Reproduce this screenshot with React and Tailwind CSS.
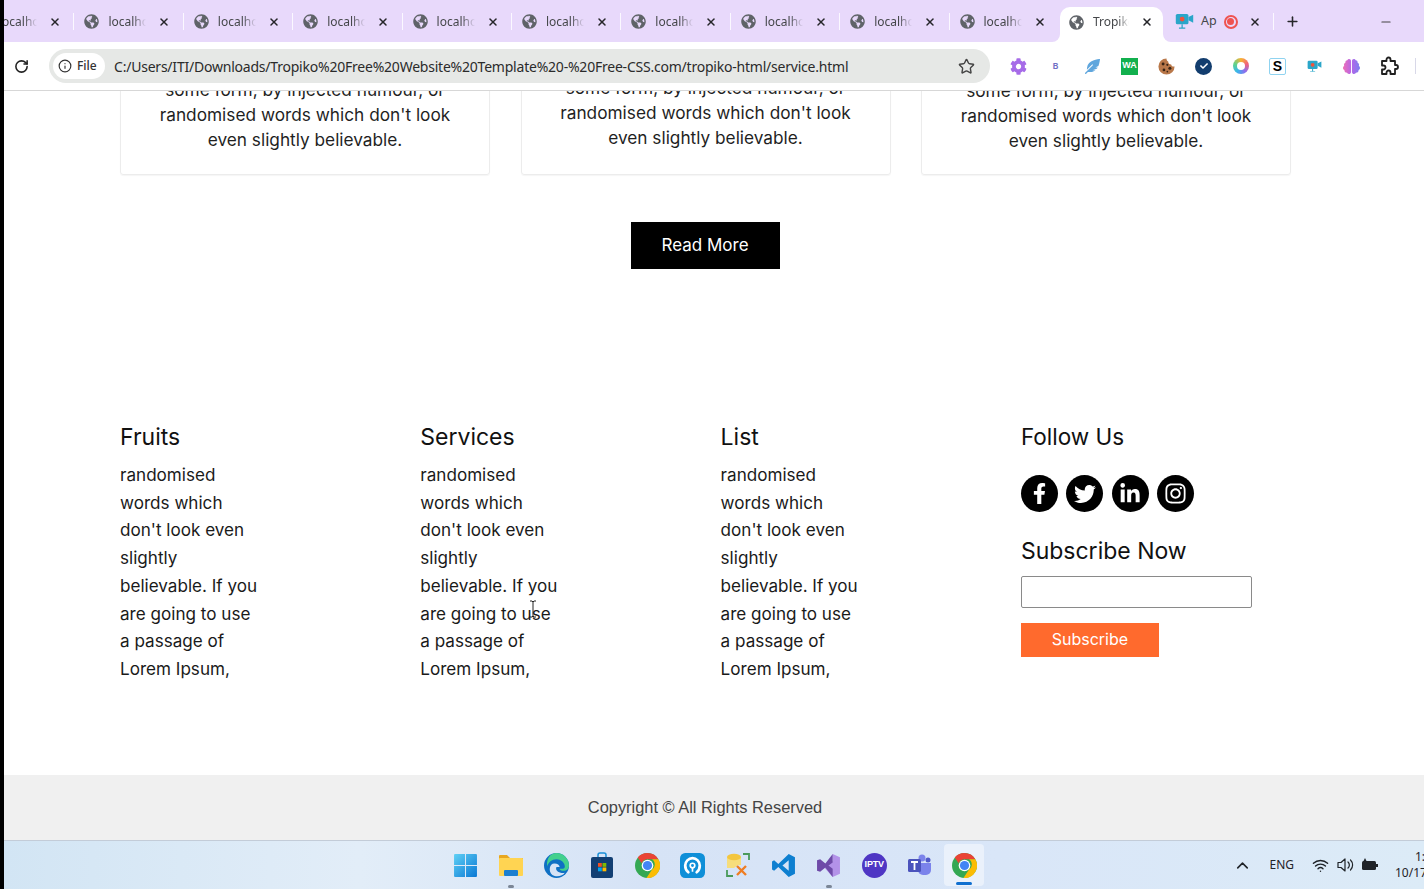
import React from 'react';
import { RotateCw, Star, Info, X, Plus, Minus, ChevronUp, Wifi } from 'lucide-react';
import { FaFacebookF, FaTwitter, FaLinkedinIn, FaInstagram, FaCog, FaFeatherAlt, FaBrain, FaGlobeAmericas, FaCheck } from 'react-icons/fa';

const ui = "font-['Noto_Sans','Open_Sans',sans-serif]";
const body = "font-['Inter','Open_Sans',sans-serif]";

const footerLines = ['randomised', 'words which', "don't look even", 'slightly', 'believable. If you', 'are going to use', 'a passage of', 'Lorem Ipsum,'];

function Tab({ label = 'localhost' }) {
    return (
        <div className="relative flex items-center h-[42px] w-[109.4px] pt-[1px] shrink-0">
            <div className="absolute left-0 top-[13px] h-[17px] w-px bg-[#fbf8ff]"></div>
            <FaGlobeAmericas size={15} className="ml-[11px] shrink-0 text-[#5f6368]" />
            <span className={`ml-[9px] w-[38px] overflow-hidden whitespace-nowrap text-[12px] text-[#45474a] [mask-image:linear-gradient(to_right,black_65%,transparent)] ${ui}`}>{label}</span>
            <X size={12} strokeWidth={3} className="ml-[12px] text-[#26262a]" />
        </div>
    );
}

function CameraIcon({ size = 22 }) {
    return (
        <svg width={size} height={size * 0.85} viewBox="0 0 24 20">
            <rect x="1" y="1" width="16" height="13" rx="2" fill="#2aa6c9" />
            <path d="M17 5l6-3v10l-6-3z" fill="#2aa6c9" />
            <circle cx="9" cy="7.500" r="3" fill="#f0533c" />
            <path d="M9 14v4M5 19h8" stroke="#2aa6c9" strokeWidth="1.600" />
        </svg>
    );
}

function Cookie() {
    return (
        <svg width="17" height="17" viewBox="0 0 20 20">
            <path d="M10 .5a9.500 9.500 0 109.500 9.500c-2 .5-3.500-.5-4-2.500-2 0-3.500-1.500-3.500-3.500C10.500 3.500 10 2 10 .5z" fill="#b9784a" />
            <circle cx="6" cy="7" r="1.700" fill="#3a2416" />
            <circle cx="11" cy="8" r="1.300" fill="#3a2416" />
            <circle cx="14" cy="12" r="1.800" fill="#3a2416" />
            <circle cx="7" cy="14" r="1.600" fill="#3a2416" />
            <circle cx="11" cy="16" r="1" fill="#3a2416" />
        </svg>
    );
}

function PuzzleIcon() {
    return (
        <svg width="20" height="20" viewBox="0 0 20 20">
            <path d="M3 5h4.500V3.500a2 2 0 014 0V5H16v4h1a2 2 0 010 4h-1v5H11.500v-1.500a2 2 0 00-4 0V18H3v-4.500h1.500a2 2 0 000-4H3z" fill="none" stroke="#1f1f1f" strokeWidth="1.800" strokeLinejoin="round" />
        </svg>
    );
}

function ToolbarIcons() {
    return (
        <div className="flex items-center ml-[10px]">
            <div className="w-[37px] flex justify-center"><FaCog size={17} className="text-[#a66be8]" /></div>
            <div className={`w-[37px] flex justify-center text-[9px] font-semibold text-[#6f6fc4] ${ui}`}>B</div>
            <div className="w-[37px] flex justify-center"><FaFeatherAlt size={15} className="text-[#5fa6dd]" /></div>
            <div className="w-[37px] flex justify-center">
                <div className="w-[17px] h-[17px] bg-[#12b04e] flex items-center justify-center text-[9px] font-bold text-white font-['Liberation_Sans',sans-serif]">WA</div>
            </div>
            <div className="w-[37px] flex justify-center"><Cookie /></div>
            <div className="w-[37px] flex justify-center">
                <div className="w-[17px] h-[17px] rounded-full bg-[#123d6e] flex items-center justify-center"><FaCheck size={8} className="text-white" /></div>
            </div>
            <div className="w-[37px] flex justify-center">
                <div className="w-[16px] h-[16px] rounded-full bg-[conic-gradient(#f9b233,#f2607a,#8a6ff0,#39b8ea,#5fd38a,#f9b233)] flex items-center justify-center">
                    <div className="w-[8px] h-[8px] rounded-full bg-white"></div>
                </div>
            </div>
            <div className="w-[37px] flex justify-center">
                <div className="w-[17px] h-[17px] rounded-[2px] border border-[#8fd3f0] flex items-center justify-center text-[14px] font-bold text-black font-['Liberation_Sans',sans-serif]">S</div>
            </div>
            <div className="w-[37px] flex justify-center"><CameraIcon size={15} /></div>
            <div className="w-[37px] flex justify-center">
                <svg width="0" height="0" className="absolute">
                    <defs>
                        <linearGradient id="brainGrad" x1="0" y1="0" x2="1" y2="0">
                            <stop offset="0" stopColor="#ee6fb5" />
                            <stop offset="0.5" stopColor="#b566e8" />
                            <stop offset="1" stopColor="#7b7df0" />
                        </linearGradient>
                    </defs>
                </svg>
                <FaBrain size={17} fill="url(#brainGrad)" />
            </div>
            <div className="w-[37px] flex justify-center"><PuzzleIcon /></div>
            <div className="ml-[8px] h-[16px] w-px bg-[#d8d8e8]"></div>
        </div>
    );
}

function BrowserChrome() {
    return (
        <div className="shrink-0">
            <div className="relative h-[42px] bg-[#e8d9fb] flex overflow-hidden">
                <div className="flex ml-[-40px]">
                    {Array.from({ length: 10 }).map((_, i) => <Tab key={i} />)}
                    <div className="w-[2px]"></div>
                </div>
                <div className="relative flex items-center h-[35px] w-[103px] mt-[7px] pb-[5px] shrink-0 bg-white rounded-t-[10px] self-start">
                    <div className="absolute bottom-0 -left-[8px] w-[8px] h-[8px] bg-white">
                        <div className="w-full h-full bg-[#e8d9fb] rounded-br-[8px]"></div>
                    </div>
                    <div className="absolute bottom-0 -right-[8px] w-[8px] h-[8px] bg-white">
                        <div className="w-full h-full bg-[#e8d9fb] rounded-bl-[8px]"></div>
                    </div>
                    <FaGlobeAmericas size={15} className="ml-[9px] shrink-0 text-[#5f6368]" />
                    <span className={`ml-[9px] w-[36px] overflow-hidden whitespace-nowrap text-[12px] text-[#45474a] [mask-image:linear-gradient(to_right,black_70%,transparent)] ${ui}`}>Tropiko</span>
                    <X size={12} strokeWidth={3} className="ml-[12px] text-[#26262a]" />
                </div>
                <div className="flex items-center h-[42px] ml-[12px] pt-[1px]">
                    <CameraIcon size={19} />
                    <span className={`ml-[7px] text-[12.5px] text-[#45474a] ${ui}`}>Ap</span>
                    <div className="ml-[7px] w-[14px] h-[14px] rounded-full border-2 border-[#ef5350] flex items-center justify-center">
                        <div className="w-[7px] h-[7px] rounded-full bg-[#ef5350]"></div>
                    </div>
                    <X size={12} strokeWidth={3} className="ml-[11px] text-[#26262a]" />
                    <div className="ml-[12px] h-[17px] w-px bg-[#fbf8ff]"></div>
                    <Plus size={15} strokeWidth={2.5} className="ml-[11px] text-[#26262a]" />
                    <Minus size={14} className="ml-[79px] text-[#444]" />
                </div>
            </div>
            <div className="h-[49px] bg-white border-b border-[#d7d7d7] flex items-center">
                <RotateCw size={15} strokeWidth={2.5} className="ml-[10px] text-[#222]" />
                <div className="ml-[20px] w-[941px] h-[34px] rounded-full bg-[#e6e8e6] flex items-center">
                    <div className="ml-[4px] w-[52px] h-[26px] rounded-full bg-white flex items-center">
                        <Info size={14} className="ml-[5px] text-[#333]" />
                        <span className={`ml-[5px] text-[12px] font-medium text-[#333] ${ui}`}>File</span>
                    </div>
                    <span className={`ml-[9px] whitespace-nowrap text-[14px] tracking-[-0.22px] text-[#2b2b2b] ${ui}`}>C:/Users/ITI/Downloads/Tropiko%20Free%20Website%20Template%20-%20Free-CSS.com/tropiko-html/service.html</span>
                    <Star size={17} strokeWidth={2} className="ml-auto mr-[15px] text-[#444]" />
                </div>
                <ToolbarIcons />
            </div>
        </div>
    );
}

function Card({ pb }) {
    return (
        <div className={`w-[370px] h-[150px] shrink-0 flex flex-col justify-end border border-[#ececec] rounded-[3px] text-center text-[17.25px] leading-[25px] text-[#1f1f1f] shadow-[0_1px_1px_rgba(0,0,0,0.04)] ${pb}`}>
            <p>some form, by injected humour, or</p>
            <p>randomised words which don't look</p>
            <p>even slightly believable.</p>
        </div>
    );
}

function FooterColumn({ title }) {
    return (
        <div>
            <h3 className="text-[23px] leading-[36px] font-normal text-[#111]">{title}</h3>
            <div className="mt-[6px] text-[17.1px] leading-[27.72px] text-[#1a1a1a]">
                {footerLines.map((line) => <div key={line} className="whitespace-nowrap">{line}</div>)}
            </div>
        </div>
    );
}

function SocialIcon({ children }) {
    return <div className="w-[37px] h-[37px] rounded-full bg-black flex items-center justify-center text-white">{children}</div>;
}

function FollowColumn() {
    return (
        <div>
            <h3 className="text-[22.5px] leading-[36px] font-normal text-[#111]">Follow Us</h3>
            <div className="mt-[20px] flex gap-[8.5px]">
                <SocialIcon><FaFacebookF size={21} /></SocialIcon>
                <SocialIcon><FaTwitter size={22} /></SocialIcon>
                <SocialIcon><FaLinkedinIn size={22} /></SocialIcon>
                <SocialIcon><FaInstagram size={23} /></SocialIcon>
            </div>
            <h3 className="mt-[21px] text-[23px] leading-[36px] font-normal text-[#111]">Subscribe Now</h3>
            <input className="mt-[7px] block w-[231px] h-[32px] bg-white border border-[#8a8a8a] rounded-[2px]" />
            <button className="mt-[15px] block w-[138px] h-[34px] pb-[2px] bg-[#ff6a2d] text-white text-[16px]">Subscribe</button>
        </div>
    );
}

function TaskIcon({ children }) {
    return <div className="relative w-[45.4px] h-full flex items-center justify-center">{children}</div>;
}

function ChromeIcon() {
    return (
        <svg width="25" height="25" viewBox="0 0 24 24">
            <circle cx="12" cy="12" r="12" fill="#34a853" />
            <path d="M12 0a12 12 0 0110.400 6H12a6 6 0 00-5.600 3.800L2.600 4.400A12 12 0 0112 0z" fill="#ea4335" />
            <path d="M22.400 6A12 12 0 0111 24l5.200-8a6 6 0 00.2-10z" fill="#fbbc04" />
            <circle cx="12" cy="12" r="5.600" fill="#fff" />
            <circle cx="12" cy="12" r="4.400" fill="#4285f4" />
        </svg>
    );
}

function Taskbar() {
    const indicator = "absolute bottom-[1px] left-1/2 -translate-x-1/2 h-[3px] w-[6px] rounded-full bg-[#7b8696]";
    return (
        <div className="relative h-[49px] shrink-0 overflow-hidden border-t border-[#c3ccd8] bg-[linear-gradient(90deg,#d2e5f4_0%,#e2edf8_25%,#d6e3f6_45%,#d9e6f8_70%,#dcebf7_100%)] flex items-center">
            <div className="ml-[439px] flex items-center h-full">
                <TaskIcon>
                    <svg width="25" height="25" viewBox="0 0 24 24">
                        <defs>
                            <linearGradient id="winGrad" x1="0" y1="0" x2="1" y2="1">
                                <stop offset="0" stopColor="#5fd0f5" />
                                <stop offset="1" stopColor="#0a78d4" />
                            </linearGradient>
                        </defs>
                        <path d="M1 2a1 1 0 011-1h9.500v10.500H1zM12.500 1H22a1 1 0 011 1v9.500H12.500zM1 12.500h10.500V23H2a1 1 0 01-1-1zM12.500 12.500H23V22a1 1 0 01-1 1h-9.500z" fill="url(#winGrad)" />
                    </svg>
                </TaskIcon>
                <TaskIcon>
                    <svg width="26" height="24" viewBox="0 0 26 24">
                        <path d="M1 3a1 1 0 011-1h7l3 3h13v4H1z" fill="#e8a720" />
                        <rect x="1" y="5" width="24" height="18" rx="1" fill="#ffd452" />
                        <rect x="6" y="17" width="14" height="6" rx="1" fill="#1c7fd0" />
                    </svg>
                    <div className={indicator}></div>
                </TaskIcon>
                <TaskIcon>
                    <svg width="25" height="25" viewBox="0 0 24 24">
                        <circle cx="12" cy="12" r="12" fill="#0f70c4" />
                        <path d="M12 0a12 12 0 0112 12c0 3.500-2.500 5-5 5-2.500 0-4-1-4-2h3c1.500 0 2-1 2-2 0-4-4-7-8-7-4.500 0-8 3-9 7C2 5 6.500 0 12 0z" fill="#43d08e" />
                        <path d="M10 10c3 0 5 1.500 5 3.500H12c-1 2 0 4.500 4 5.500 1 .3 3 .3 4 0-2 3-8 4.500-12 2-4-3-3-11 2-11z" fill="#d6e3f6" />
                    </svg>
                </TaskIcon>
                <TaskIcon>
                    <svg width="24" height="26" viewBox="0 0 24 26">
                        <path d="M8 6V3a2 2 0 012-2h4a2 2 0 012 2v3" fill="none" stroke="#1a8fd8" strokeWidth="1.500" />
                        <rect x="1" y="5" width="22" height="21" rx="2" fill="#123f73" />
                        <rect x="8" y="11" width="3.800" height="3.800" fill="#f25022" />
                        <rect x="12.500" y="11" width="3.800" height="3.800" fill="#7fba00" />
                        <rect x="8" y="15.500" width="3.800" height="3.800" fill="#00a4ef" />
                        <rect x="12.500" y="15.500" width="3.800" height="3.800" fill="#ffb900" />
                    </svg>
                </TaskIcon>
                <TaskIcon><ChromeIcon /></TaskIcon>
                <TaskIcon>
                    <svg width="25" height="25" viewBox="0 0 24 24">
                        <rect width="24" height="24" rx="5" fill="#0f8fd8" />
                        <path d="M8 18.500C5.500 16.500 5 14 5 12a7 7 0 0114 0c0 2-.5 4.500-3 6.500" fill="none" stroke="#fff" strokeWidth="2.600" strokeLinecap="round" />
                        <circle cx="12" cy="12" r="2.200" fill="none" stroke="#fff" strokeWidth="1.600" />
                        <path d="M12 14v4" stroke="#fff" strokeWidth="1.600" />
                    </svg>
                </TaskIcon>
                <TaskIcon>
                    <svg width="24" height="24" viewBox="0 0 24 24">
                        <path d="M17 1h6v6M1 17v6h6" fill="none" stroke="#4a9a5a" strokeWidth="1.800" />
                        <path d="M1 4v11h7l4-3h3V4z" fill="#f6dd7c" />
                        <ellipse cx="8" cy="4" rx="7" ry="3.200" fill="#f3c63f" />
                        <path d="M11 22l9-9M11 13l9 9" stroke="#ef7d22" strokeWidth="2.400" />
                    </svg>
                </TaskIcon>
                <TaskIcon>
                    <svg width="25" height="25" viewBox="0 0 24 24">
                        <path d="M17 1l6 3v16l-6 3L7 13.500l-4 3.500-2-1.200v-7.600L3 7l4 3.500z" fill="#0e7fd0" />
                        <path d="M17 7l-6 5 6 5z" fill="#d6e3f6" />
                    </svg>
                </TaskIcon>
                <TaskIcon>
                    <svg width="25" height="25" viewBox="0 0 24 24">
                        <path d="M16 1l7 3v16l-7 3-8-9 8-6z" fill="#b392e8" />
                        <path d="M1 7l3-1 5 4 7-9v8l-4 3 4 3v8l-7-9-5 4-3-1z" fill="#6e4aa8" />
                    </svg>
                    <div className={indicator}></div>
                </TaskIcon>
                <TaskIcon>
                    <div className="w-[25px] h-[25px] rounded-full bg-[#4f36c4] flex items-center justify-center text-[9px] font-bold tracking-[-0.2px] text-white font-['Liberation_Sans',sans-serif]">IPTV</div>
                </TaskIcon>
                <TaskIcon>
                    <svg width="25" height="24" viewBox="0 0 25 24">
                        <circle cx="15" cy="5" r="3.500" fill="#7b83eb" />
                        <circle cx="21" cy="7" r="2.500" fill="#5059c9" />
                        <path d="M11 10h13v7a5 5 0 01-5 5h-3a5 5 0 01-5-5z" fill="#7b83eb" />
                        <rect x="1" y="6" width="13" height="13" rx="1.500" fill="#4b53bc" />
                        <path d="M4 9h7M7.500 9v8" stroke="#fff" strokeWidth="1.800" />
                    </svg>
                </TaskIcon>
                <div className="relative ml-[2px] w-[40px] h-[42px] rounded-[4px] bg-[#eaf1fb] flex items-center justify-center">
                    <ChromeIcon />
                    <div className="absolute bottom-[1px] left-1/2 -translate-x-1/2 h-[3px] w-[16px] rounded-full bg-[#0f6fd0]"></div>
                </div>
            </div>
            <div className={`ml-auto flex items-center h-full text-[#1f2328] ${ui}`}>
                <ChevronUp size={19} className="mr-[17px]" />
                <span className="text-[12px] mr-[18px]">ENG</span>
                <Wifi size={17} className="mr-[8px]" />
                <svg width="18" height="16" viewBox="0 0 18 16" className="mr-[6px]">
                    <path d="M1 5.500h3L8 2v12L4 10.500H1z" fill="none" stroke="#1f2328" strokeWidth="1.200" strokeLinejoin="round" />
                    <path d="M11 5a4 4 0 010 6M13.500 3a7 7 0 010 10" fill="none" stroke="#1f2328" strokeWidth="1.200" strokeLinecap="round" />
                </svg>
                <svg width="18" height="14" viewBox="0 0 18 14" className="mr-[16px]">
                    <rect x="1" y="3" width="14" height="9" rx="1.500" fill="#1f2328" />
                    <rect x="15" y="6" width="2" height="3" fill="#1f2328" />
                    <path d="M4 0l-2 4h4z" fill="#1f2328" />
                </svg>
                <div className="w-[29px] overflow-hidden text-[12px] leading-[16px]">
                    <div className="whitespace-nowrap pl-[20px]">1:</div>
                    <div className="whitespace-nowrap">10/17</div>
                </div>
            </div>
        </div>
    );
}

export default function App() {
    return (
        <div className="w-[1424px] h-[889px] bg-black pl-1 overflow-hidden">
            <div className="h-full flex flex-col bg-white">
                <BrowserChrome />
                <main className={`relative flex-1 overflow-hidden ${body}`}>
                    <div className="w-[1402px]">
                        <div className="h-[84px] pl-[116px] flex items-end gap-[30.5px]">
                            <Card pb="pb-[22px]" />
                            <Card pb="pb-[24px]" />
                            <Card pb="pb-[21px]" />
                        </div>
                        <div className="mt-[47px] flex justify-center">
                            <button className="w-[149px] h-[47px] bg-black text-white text-[17px]">Read More</button>
                        </div>
                        <div className="mt-[150px] pl-[116px] grid grid-cols-[300.3px_300.3px_300.3px_300.3px]">
                            <FooterColumn title="Fruits" />
                            <FooterColumn title="Services" />
                            <FooterColumn title="List" />
                            <FollowColumn />
                        </div>
                    </div>
                    <svg width="8" height="18" viewBox="0 0 8 18" className="absolute left-[525px] top-[509px]">
                        <path d="M1 1h2l1 1 1-1h2M4 2v14M1 17h2l1-1 1 1h2" fill="none" stroke="#222" strokeWidth="1" />
                    </svg>
                </main>
                <footer className="h-[65px] shrink-0 w-full bg-[#f0f0f0]">
                    <div className="w-[1402px] h-full flex items-center justify-center text-[16.4px] text-[#444] font-['Liberation_Sans',sans-serif]">
                        Copyright © All Rights Reserved
                    </div>
                </footer>
                <Taskbar />
            </div>
        </div>
    );
}
